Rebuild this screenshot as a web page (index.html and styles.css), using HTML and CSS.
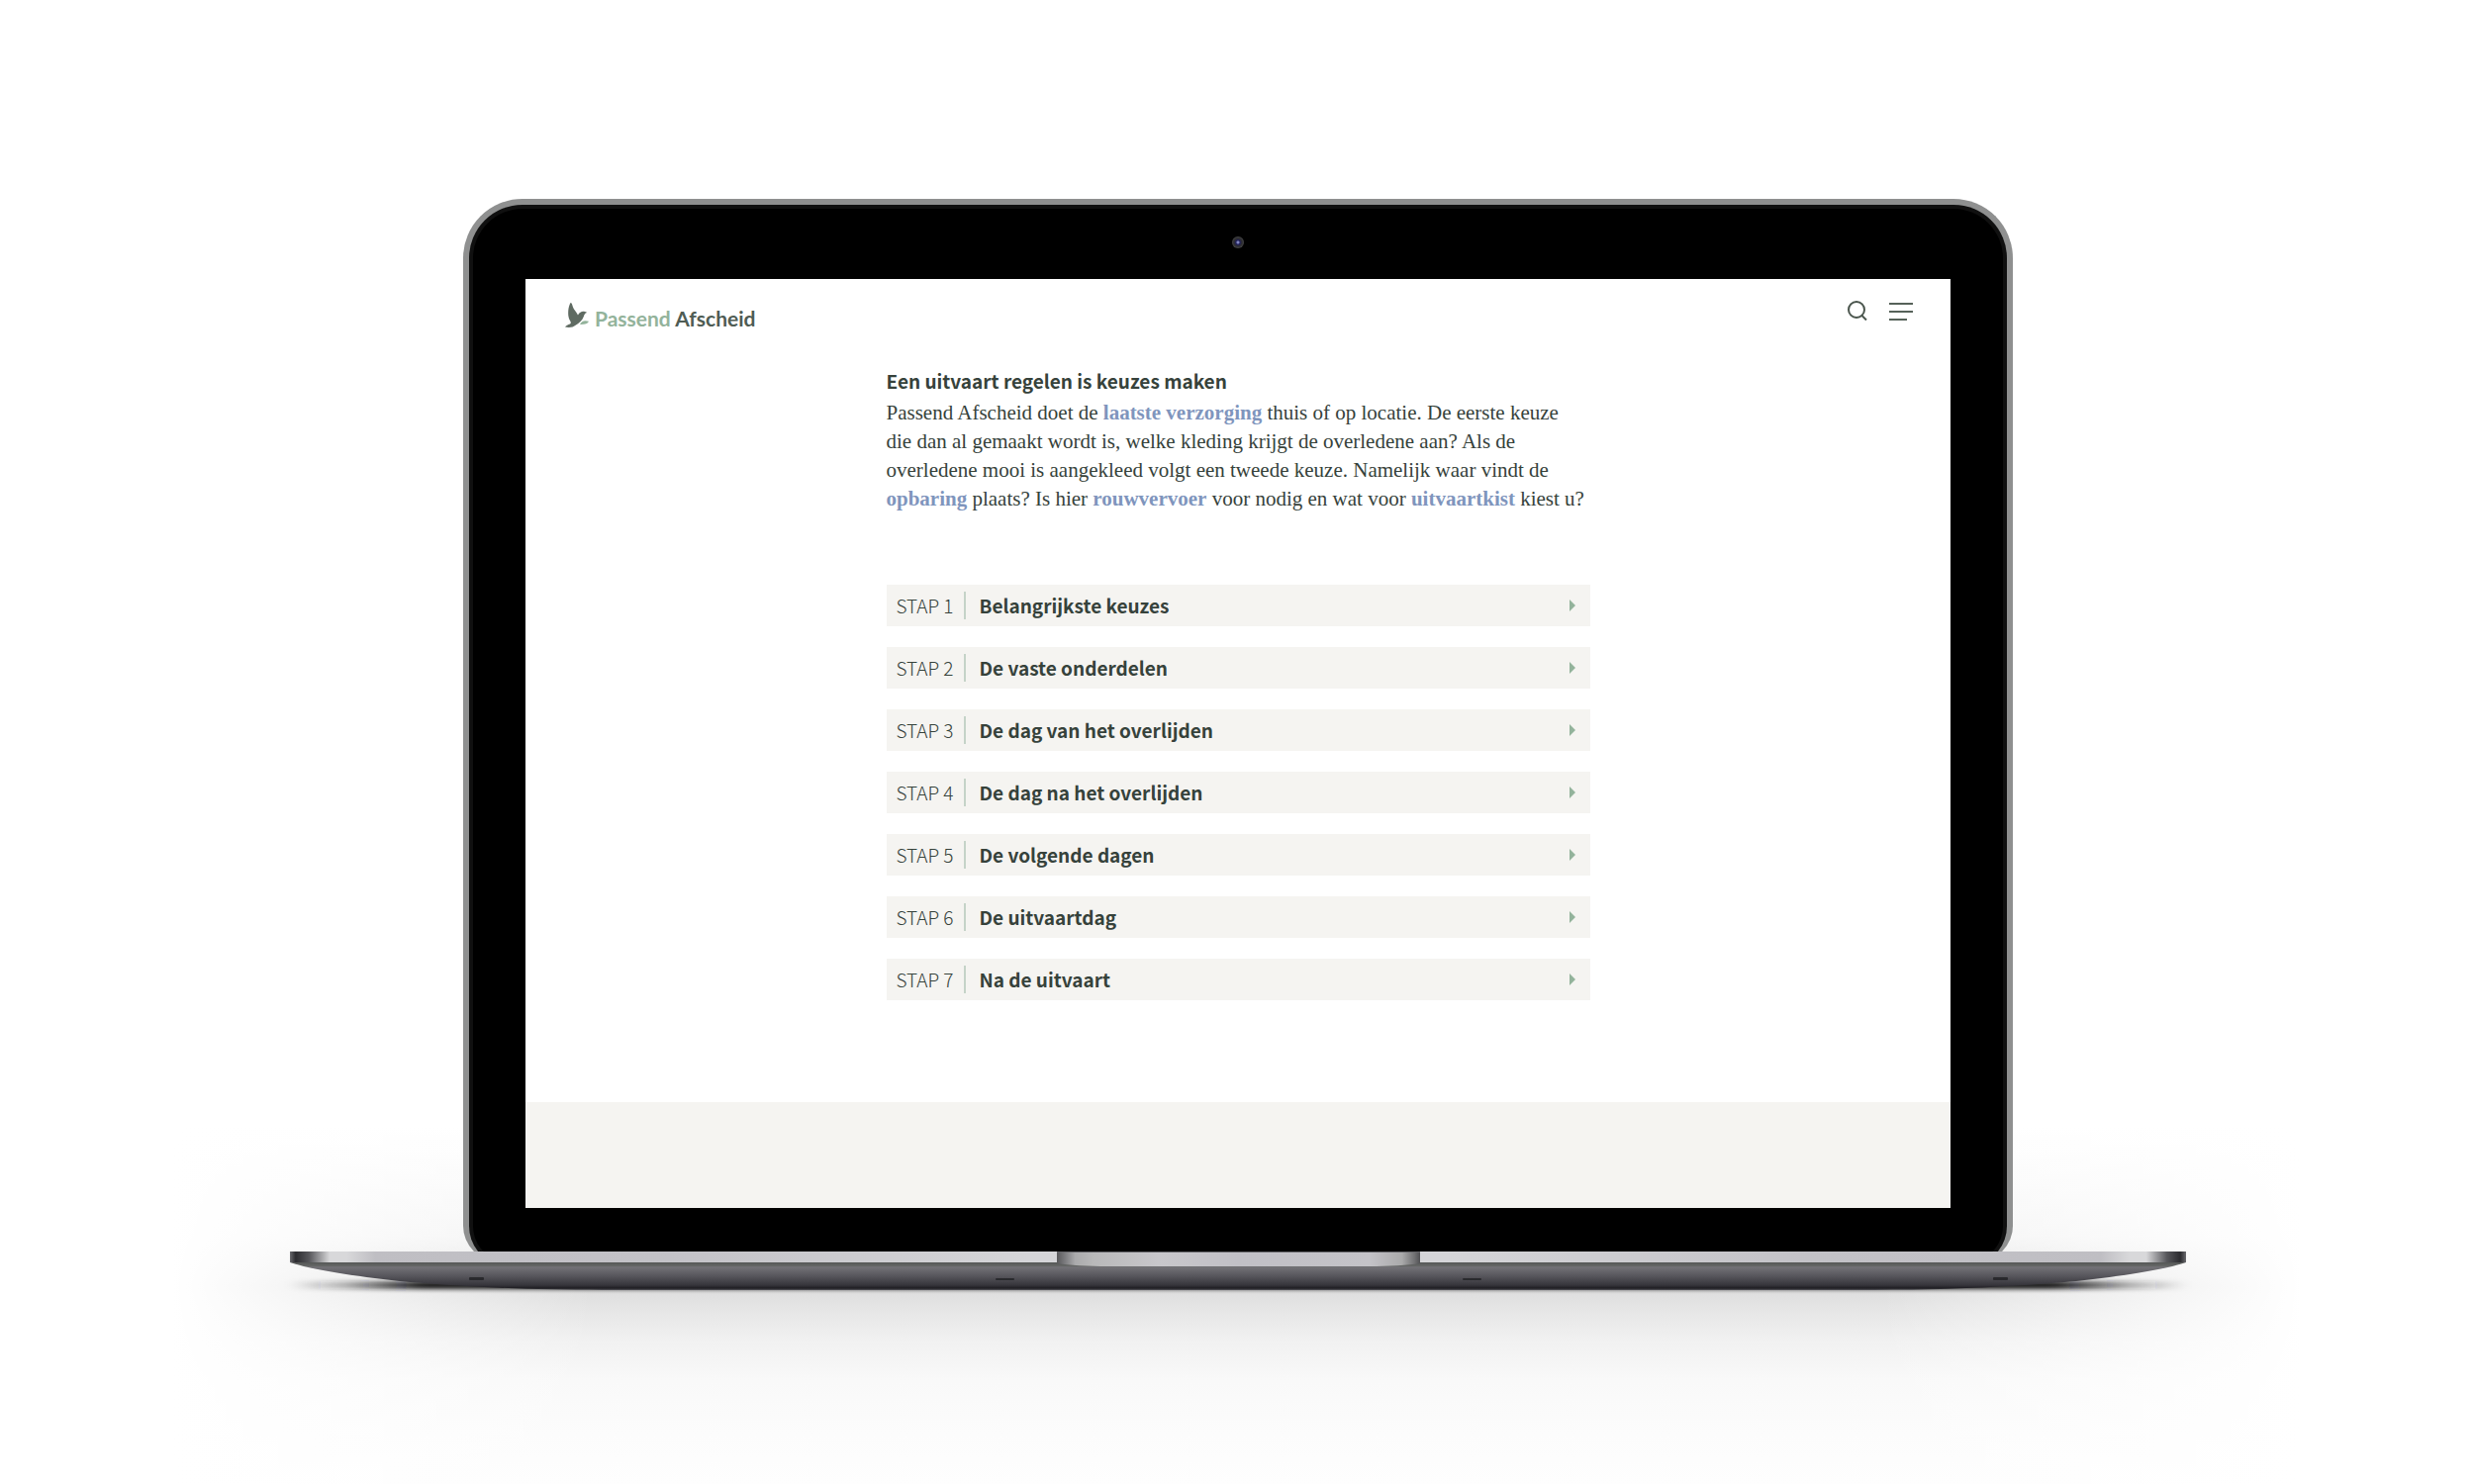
FILE: index.html
```html
<!DOCTYPE html>
<html lang="nl">
<head>
<meta charset="utf-8">
<title>Passend Afscheid</title>
<link rel="stylesheet" href="styles.css">
</head>
<body>
<div class="stage">
  <div class="lid">
    <div class="bezel-top"><span class="camera"></span></div>
    <div class="screen">
      <header class="site-header">
        <a class="logo" href="#">
          <svg class="logo-bird" viewBox="0 0 24 26" aria-hidden="true">
            <path fill="#5f6b62" d="M5.500 0C6.800 0 7.200 2 8 4.500C9 7.500 11.500 9 13 12.500C14.500 9.500 17 8.500 19 8.800C20.500 9 21.500 9.300 22 10C20 10.500 19.500 12 18.800 14C17.500 18 14 20.500 11 22.500C8 25 4 25.500 0 24.500C1 22.800 3 22.300 5 21.500C7 20.500 5 18.500 4 16C2.500 12 3 4 5.500 0Z"/>
            <path fill="#93b39b" d="M15 22C16 19.500 18 18.300 20.500 18.200C22 18.300 23 18.800 24 18.700C23 21 20 22.200 15 22Z"/>
          </svg>
          <span class="logo-text"><span class="logo-light">Passend</span> <span class="logo-dark">Afscheid</span></span>
        </a>
        <div class="tools">
          <button class="tool" type="button" aria-label="Zoeken">
            <svg width="20" height="20" viewBox="0 0 20 20" fill="none" stroke="#4a554d" stroke-width="2"><circle cx="9" cy="9" r="8"/><path d="M14 14.500L19 19.500"/></svg>
          </button>
          <button class="tool" type="button" aria-label="Menu">
            <svg width="24" height="20" viewBox="0 0 24 20" fill="none" stroke="#566259" stroke-width="2"><path d="M0 3H24M0 11H24M0 19H18"/></svg>
          </button>
        </div>
      </header>
      <main class="content">
        <h1 class="title">Een uitvaart regelen is keuzes maken</h1>
        <p class="intro">Passend Afscheid doet de <a href="#">laatste verzorging</a> thuis of op locatie. De eerste keuze<br>die dan al gemaakt wordt is, welke kleding krijgt de overledene aan? Als de<br>overledene mooi is aangekleed volgt een tweede keuze. Namelijk waar vindt de<br><a href="#">opbaring</a> plaats? Is hier <a href="#">rouwvervoer</a> voor nodig en wat voor <a href="#">uitvaartkist</a> kiest u?</p>
        <div class="steps">
          <button class="step" type="button"><span class="step-no">STAP 1</span><span class="step-name">Belangrijkste keuzes</span><span class="arrow"></span></button>
          <button class="step" type="button"><span class="step-no">STAP 2</span><span class="step-name">De vaste onderdelen</span><span class="arrow"></span></button>
          <button class="step" type="button"><span class="step-no">STAP 3</span><span class="step-name">De dag van het overlijden</span><span class="arrow"></span></button>
          <button class="step" type="button"><span class="step-no">STAP 4</span><span class="step-name">De dag na het overlijden</span><span class="arrow"></span></button>
          <button class="step" type="button"><span class="step-no">STAP 5</span><span class="step-name">De volgende dagen</span><span class="arrow"></span></button>
          <button class="step" type="button"><span class="step-no">STAP 6</span><span class="step-name">De uitvaartdag</span><span class="arrow"></span></button>
          <button class="step" type="button"><span class="step-no">STAP 7</span><span class="step-name">Na de uitvaart</span><span class="arrow"></span></button>
        </div>
      </main>
      <footer class="band"></footer>
    </div>
  </div>
  <svg class="base" viewBox="0 0 1916 42" aria-hidden="true">
    <defs>
      <linearGradient id="edge">
        <stop offset="0" stop-color="#6a6a6e"/><stop offset=".003" stop-color="#2c2c30"/><stop offset=".01" stop-color="#56565a"/><stop offset=".021" stop-color="#d8d8da"/><stop offset=".03" stop-color="#d8d8da"/><stop offset=".045" stop-color="#bfbec3"/><stop offset=".2" stop-color="#c3c2c7"/><stop offset=".39" stop-color="#d5d5d8"/>
        <stop offset=".61" stop-color="#d5d5d8"/><stop offset=".8" stop-color="#c3c2c7"/><stop offset=".955" stop-color="#bfbec3"/><stop offset=".97" stop-color="#d8d8da"/><stop offset=".979" stop-color="#d8d8da"/><stop offset=".99" stop-color="#56565a"/><stop offset=".997" stop-color="#2c2c30"/><stop offset="1" stop-color="#6a6a6e"/>
      </linearGradient>
      <linearGradient id="belly" x2="0" y2="1">
        <stop offset="0" stop-color="#555756"/><stop offset=".14" stop-color="#666867"/><stop offset=".17" stop-color="#737277"/><stop offset=".5" stop-color="#56555b"/><stop offset=".82" stop-color="#36353b"/><stop offset=".93" stop-color="#1f1e23"/><stop offset="1" stop-color="#55555a"/>
      </linearGradient>
      <linearGradient id="notch">
        <stop offset="0" stop-color="#58585a"/><stop offset=".02" stop-color="#77777a"/><stop offset=".05" stop-color="#aaaaac"/><stop offset=".1" stop-color="#b9b9ba"/><stop offset=".28" stop-color="#c8c7cb"/><stop offset=".5" stop-color="#c1c0c6"/><stop offset=".86" stop-color="#c4c3c8"/><stop offset=".95" stop-color="#aaaaab"/><stop offset=".985" stop-color="#707072"/><stop offset="1" stop-color="#505053"/>
      </linearGradient>
      <linearGradient id="contact">
        <stop offset="0" stop-color="#1c1c1e" stop-opacity="0"/><stop offset=".03" stop-color="#1c1c1e" stop-opacity=".3"/><stop offset=".07" stop-color="#1c1c1e"/><stop offset=".93" stop-color="#1c1c1e"/><stop offset=".97" stop-color="#1c1c1e" stop-opacity=".3"/><stop offset="1" stop-color="#1c1c1e" stop-opacity="0"/>
      </linearGradient>
      <filter id="soft" x="-5%" y="-200%" width="110%" height="500%"><feGaussianBlur stdDeviation="6 2"/></filter>
    </defs>
    <rect x="0" y="30" width="1916" height="8" fill="url(#contact)" filter="url(#soft)"/>
    <path fill="url(#belly)" d="M0 11H1916C1896 18 1850 25 1805 30C1760 34 1690 39 1600 39H316C226 39 156 34 111 30C66 25 20 18 0 11Z"/>
    <path fill="url(#edge)" d="M0 0H1916V11H0Z"/>
    <path fill="url(#notch)" d="M775 0H1142V12C1130 14 1110 15 1090 15H827C807 15 787 14 775 12Z"/>
    <path fill="#66666a" d="M775 0H1142V1H775Z"/>
    <g fill="#29292d"><rect x="181" y="26" width="15" height="3" rx="1"/><rect x="713" y="27" width="19" height="2" rx="1"/><rect x="1185" y="27" width="19" height="2" rx="1"/><rect x="1721" y="26" width="15" height="3" rx="1"/></g>
  </svg>
</div>
</body>
</html>
```
FILE: styles.css
```css
* { box-sizing: border-box; }
body {
  margin: 0;
  background: #fff;
  color: #36423b;
  font-family: "Noto Sans CJK SC", sans-serif;
}
.stage {
  min-height: 100vh;
  padding: 201px 0 0 2px;
  display: flex;
  flex-direction: column;
  align-items: center;
  overflow: hidden;
  background:
    linear-gradient(to right, #fff 7%, transparent 24%, transparent 76%, #fff 93%),
    linear-gradient(#fff 1140px, #f4f4f4 1250px, #dcdcdc 1300px, #e6e6e6 1325px, #f1f1f1 1355px, #f9f9f9 1395px, #fcfcfc 1450px, #fefefe 1500px);
}
.lid {
  width: 63%;
  max-width: 1566px;
  padding: 0 57px 54px;
  border: 6px solid #8f9090;
  border-bottom: 0;
  border-radius: 60px 60px 36px 36px;
  background: #000;
  box-shadow: inset 0 0 0 4px #101010;
}
.bezel-top {
  height: 75px;
  display: flex;
  justify-content: center;
  align-items: center;
}
.camera {
  width: 12px;
  height: 12px;
  border-radius: 50%;
  background: radial-gradient(circle, #8085c0 0 1px, #20205c 2px, #2c2c2e 4px, #444446 6px);
}
.screen { background: #fff; }
.site-header {
  display: flex;
  justify-content: space-between;
  align-items: flex-start;
  padding: 20px 38px 0 40px;
}
.logo {
  display: flex;
  align-items: center;
  gap: 6px;
  text-decoration: none;
}
.logo-bird { width: 24px; height: 26px; }
.logo-text {
  font: 700 21px/28px Lato, sans-serif;
  white-space: nowrap;
  padding-top: 6px;
}
.logo-light { color: #93b39b; }
.logo-dark { color: #4f5c54; }
.tools {
  display: flex;
  align-items: center;
  gap: 22px;
  padding-top: 2px;
}
.tool { display: flex; padding: 0; border: 0; background: none; }
.content {
  max-width: 711px;
  margin: 0 auto;
  padding: 35px 0 103px;
}
.title {
  margin: 0;
  font-size: 19px;
  line-height: 28px;
  font-weight: 700;
}
.intro {
  margin: 4px 0 72px;
  font: 21px/29px "Liberation Serif", serif;
  white-space: nowrap;
}
.intro a { color: #7f95bd; font-weight: 700; text-decoration: none; }
.steps { display: grid; gap: 21px; }
.step {
  display: flex;
  align-items: center;
  height: 42px;
  padding: 0 15px 0 10px;
  border: 0;
  background: #f5f4f1;
  color: inherit;
  font: 700 19px/28px "Noto Sans CJK SC", sans-serif;
  text-align: left;
}
.step-no {
  width: 70px;
  border-right: 2px solid #c5d3c8;
  font-weight: 300;
}
.step-name { flex: 1; padding-left: 14px; }
.arrow {
  border: 6px solid transparent;
  border-left-color: #93b39b;
  border-right: 0;
}
.band { height: 107px; background: #f5f4f1; }
.base {
  display: block;
  position: relative;
  width: 77%;
  max-width: 1916px;
  margin-top: -10px;
  overflow: visible;
}
```
